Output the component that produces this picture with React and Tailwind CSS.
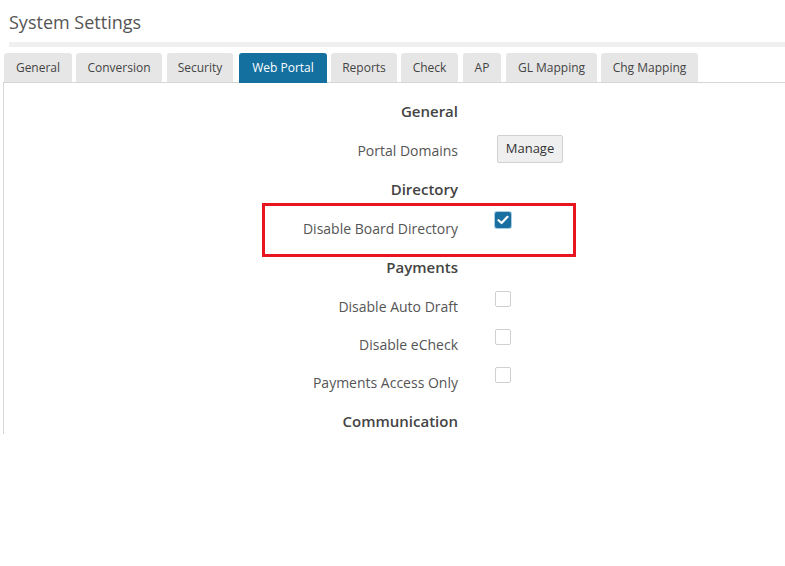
import React from 'react';

const TABS = [
  { name: 'General', w: 'w-[68px]', gap: 'mr-[4px]' },
  { name: 'Conversion', w: 'w-[86px]', gap: 'mr-[5px]' },
  { name: 'Security', w: 'w-[66px]', gap: 'mr-[6px]' },
  { name: 'Web Portal', w: 'w-[88px]', gap: 'mr-[4px]' },
  { name: 'Reports', w: 'w-[66px]', gap: 'mr-[4px]' },
  { name: 'Check', w: 'w-[57px]', gap: 'mr-[5px]' },
  { name: 'AP', w: 'w-[38px]', gap: 'mr-[5px]' },
  { name: 'GL Mapping', w: 'w-[91px]', gap: 'mr-[4px]' },
  { name: 'Chg Mapping', w: 'w-[97px]', gap: 'mr-0' },
];
const ACTIVE = 'Web Portal';

function Heading({ children, h = 'h-[39px]' }) {
  return (
    <div className={`flex items-center ${h}`}>
      <div className="w-[454px] text-right text-[15px] font-semibold text-[#444]">{children}</div>
    </div>
  );
}

function Field({ label, h = 'h-[39px]', children }) {
  return (
    <div className={`flex ${h}`}>
      <div className="w-[454px] flex items-center justify-end text-[14px] text-[#555]">{label}</div>
      <div className="ml-[36px] pt-[4px]">{children}</div>
    </div>
  );
}

function Checkbox({ checked }) {
  if (checked) {
    return (
      <div className="-mt-[2px] w-[18px] h-[18px] rounded-[3px] bg-[#a9cde3] p-[1px]">
        <div className="w-full h-full rounded-[2px] bg-[#1a6fa1] flex items-center justify-center">
          <svg width="12" height="10" viewBox="0 0 12 10" fill="none">
            <path d="M1.5 5.2 L4.6 8 L10.5 1.8" stroke="#fff" strokeWidth="2.2" strokeLinecap="round" strokeLinejoin="round" />
          </svg>
        </div>
      </div>
    );
  }
  return <div className="ml-[1px] w-[16px] h-[16px] rounded-[2px] border border-[#d0d0d0] bg-white" />;
}

export default function App() {
  return (
    <div className="relative w-[785px] h-[566px] bg-white overflow-hidden font-['Open_Sans',sans-serif]">
      {/* Page header */}
      <div className="pl-[9px] pt-[10px]">
        <h1 className="text-[18px] leading-[24px] text-[#555]">System Settings</h1>
        <div className="mt-[8px] h-[5px] bg-[#f0f0f0]" />
      </div>

      {/* Tabs */}
      <div className="mt-[6px] ml-[3px] flex items-end pl-[1px] border-b border-[#d6d6d6]">
        {TABS.map((t) => (
          <div
            key={t.name}
            className={`${t.w} ${t.gap} rounded-t-[3px] text-center text-[12px] ${
              t.name === ACTIVE
                ? 'bg-[#13709f] text-white h-[30px] leading-[30px] -mb-[1px]'
                : 'bg-[#e6e6e6] text-[#444] h-[29px] leading-[29px]'
            }`}
          >
            {t.name}
          </div>
        ))}
      </div>

      {/* Content */}
      <div className="ml-[3px] h-[351px] border-l border-[#d8d8d8] overflow-hidden pt-[9px]">
        <Heading>General</Heading>
        <Field label="Portal Domains">
          <button className="ml-[3px] w-[66px] h-[28px] rounded-[2px] border border-[#d0d0d0] bg-[#efefef] text-[13px] font-medium text-[#333]">
            Manage
          </button>
        </Field>
        <Heading>Directory</Heading>
        <Field label="Disable Board Directory">
          <Checkbox checked />
        </Field>
        <Heading>Payments</Heading>
        <Field label="Disable Auto Draft" h="h-[38px]">
          <Checkbox />
        </Field>
        <Field label="Disable eCheck" h="h-[38px]">
          <Checkbox />
        </Field>
        <Field label="Payments Access Only" h="h-[38px]">
          <Checkbox />
        </Field>
        <Heading h="h-[41px]">Communication</Heading>
      </div>

      {/* Annotation */}
      <div className="absolute left-[262px] top-[203px] w-[314px] h-[54px] border-[3px] border-[#e8141f]" />
    </div>
  );
}
